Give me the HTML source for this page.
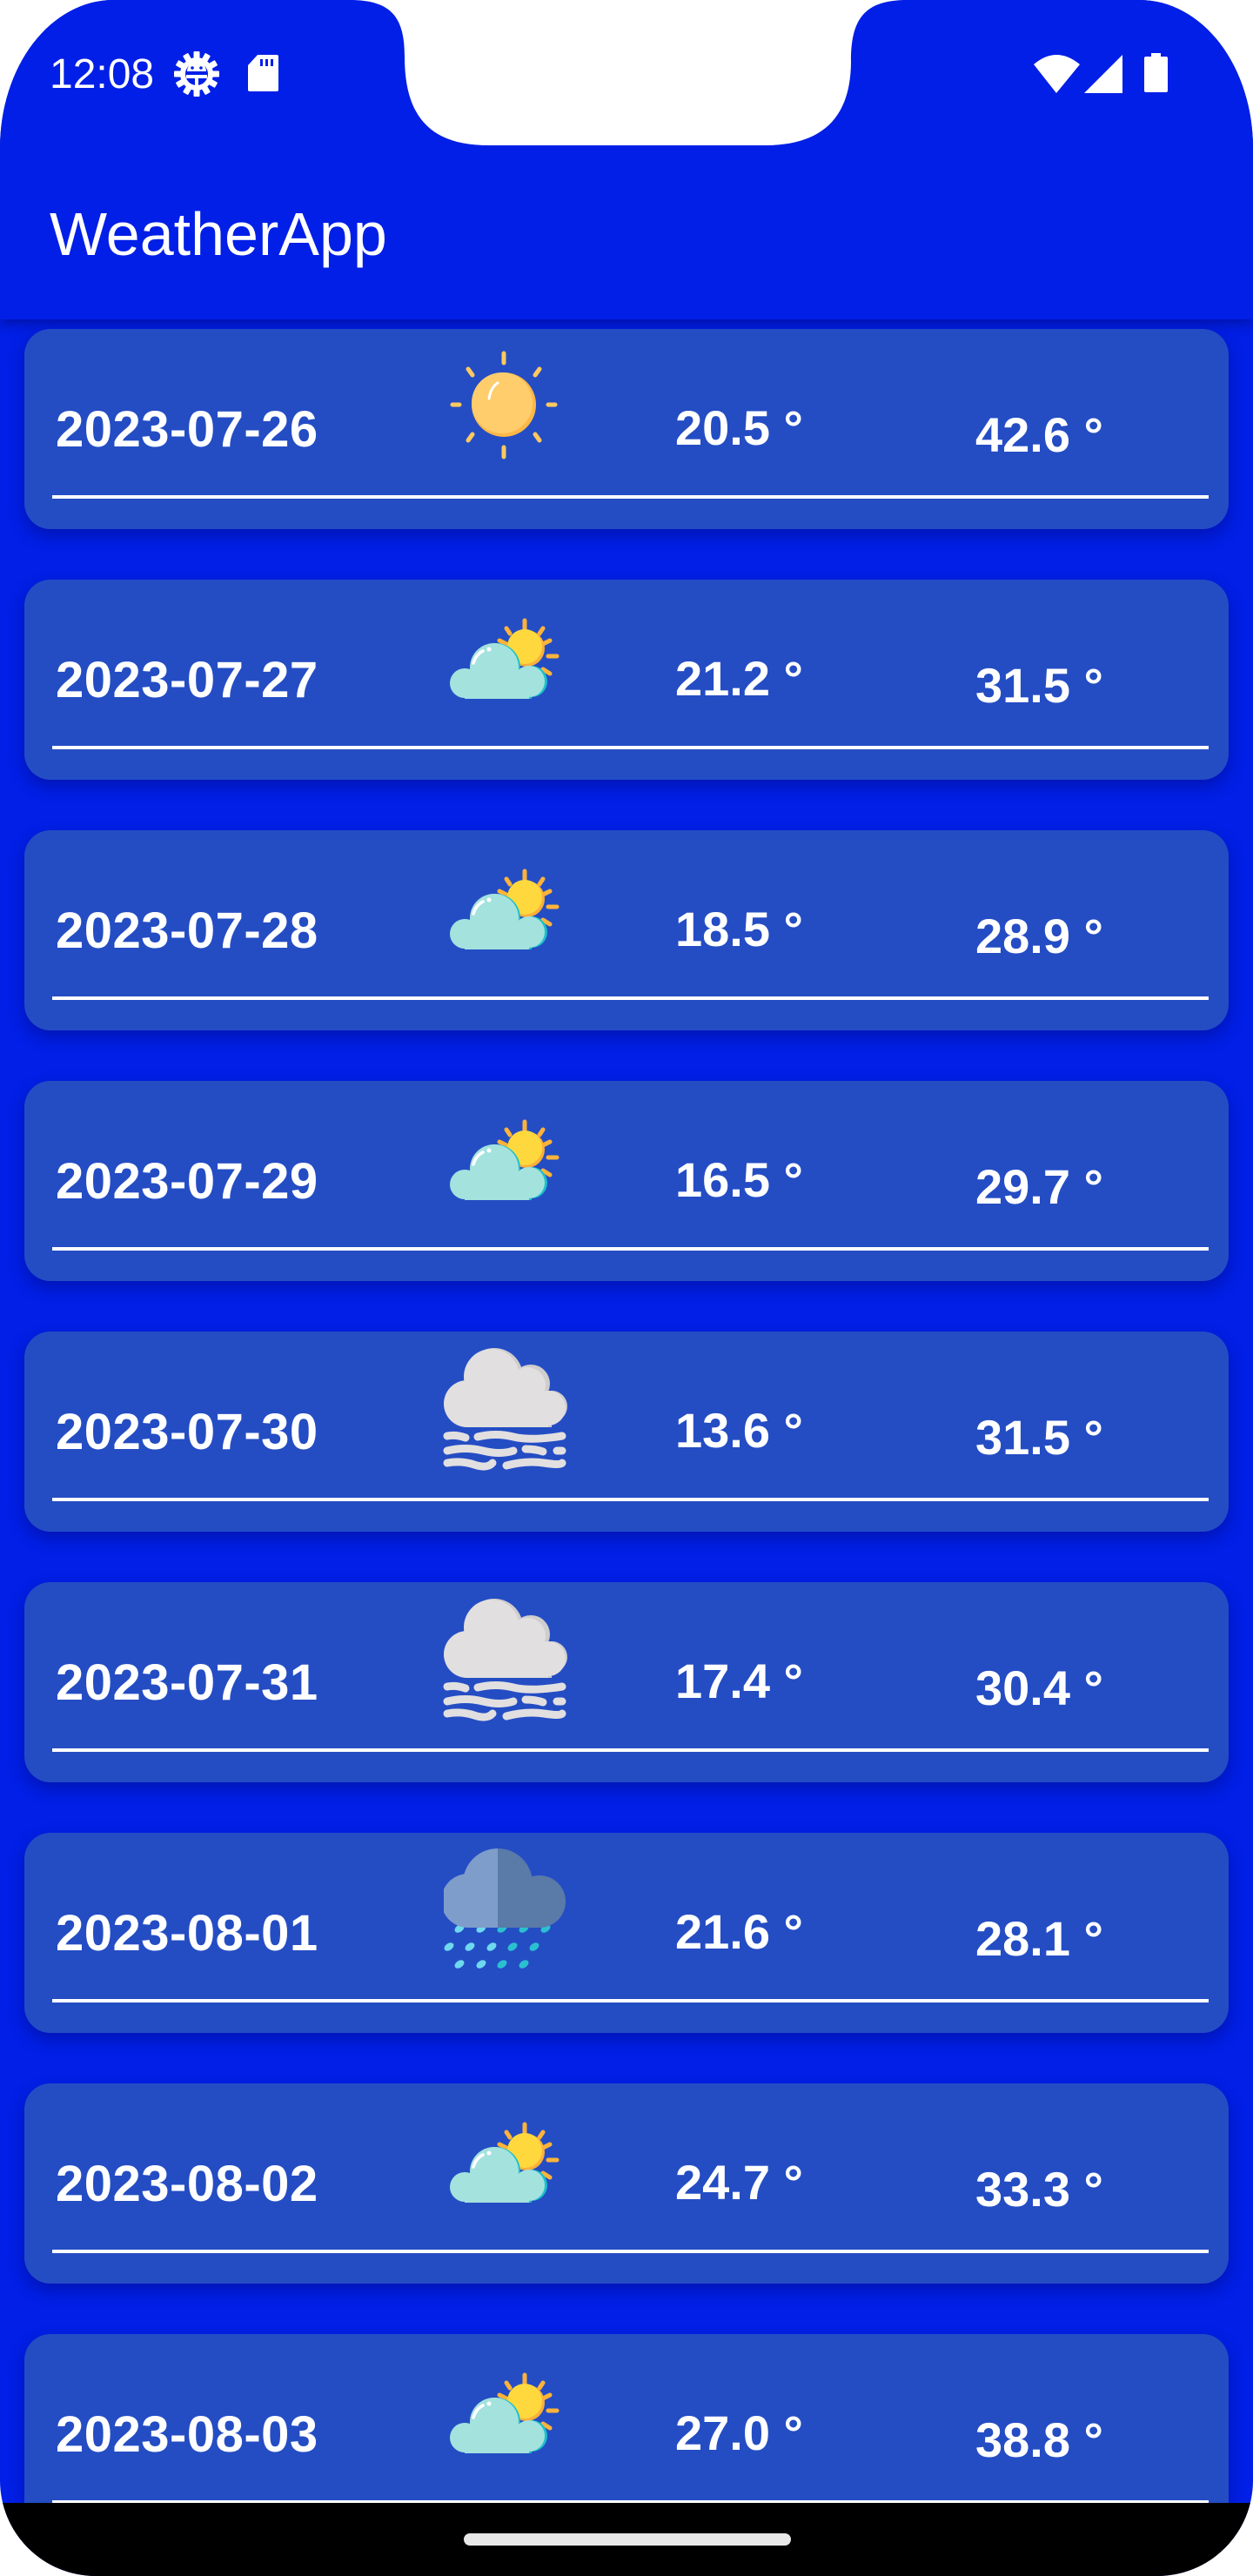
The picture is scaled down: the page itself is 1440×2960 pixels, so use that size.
<!DOCTYPE html>
<html><head><meta charset="utf-8"><style>
*{margin:0;padding:0;box-sizing:border-box}
html,body{width:1440px;height:2960px;overflow:hidden;background:#fff}
#screen{position:absolute;left:0;top:0;width:1440px;height:2960px;background:#011fe6;border-radius:130px 130px 110px 110px / 170px 170px 110px 110px;overflow:hidden;font-family:"Liberation Sans",sans-serif}
.appbar{position:absolute;left:0;top:0;width:1440px;height:367px;box-shadow:0 4px 14px rgba(0,0,80,.45);background:#011fe6}
.title{position:absolute;left:57px;top:234px;font-size:70px;color:#fff;line-height:1}
.time{position:absolute;left:57px;top:62px;font-size:48px;color:#fff;line-height:1}
.card{position:absolute;left:28px;width:1384px;height:230px;background:#244dc4;border-radius:30px;box-shadow:0 8px 18px rgba(0,0,90,.35)}
.card .d{position:absolute;left:36px;top:87px;font-size:58px;font-weight:bold;color:#fff;line-height:1;letter-spacing:.5px}
.card .t1{position:absolute;left:748px;top:86px;font-size:56px;font-weight:bold;color:#fff;line-height:1}
.card .t2{position:absolute;left:1093px;top:94px;font-size:56px;font-weight:bold;color:#fff;line-height:1}
.card .ln{position:absolute;left:32px;top:191px;width:1329px;height:4px;background:#fff}
.card svg{position:absolute;left:482px;top:20px}
.nav{position:absolute;left:0;top:2876px;width:1440px;height:84px;background:#000}
.pill{position:absolute;left:533px;top:2911px;width:376px;height:14px;border-radius:7px;background:#e8e8e8}
</style></head><body>
<svg width="0" height="0" style="position:absolute"><defs>
<g id="sun"><g stroke="#ffc95e" stroke-width="5" stroke-linecap="round">
<line x1="69" y1="8" x2="69" y2="19"/><line x1="69" y1="116" x2="69" y2="127"/><line x1="10" y1="67" x2="18" y2="67"/><line x1="120" y1="67" x2="128" y2="67"/>
<line x1="28" y1="26" x2="33" y2="33"/><line x1="110" y1="26" x2="105" y2="33"/><line x1="28" y1="108" x2="33" y2="101"/><line x1="110" y1="108" x2="105" y2="101"/></g>
<circle cx="69" cy="67" r="37" fill="#fdb848"/><circle cx="67" cy="65" r="35" fill="#ffcd6c"/>
<path d="M52 60 Q54 47 62 42" stroke="#fff" stroke-width="3" fill="none" stroke-linecap="round"/></g>
<g id="pc"><g stroke="#fdb33a" stroke-width="5" stroke-linecap="round">
<line x1="93" y1="27" x2="93" y2="37"/><line x1="72" y1="36" x2="76" y2="42"/><line x1="114" y1="36" x2="110" y2="42"/><line x1="64" y1="50" x2="72" y2="54"/><line x1="122" y1="50" x2="114" y2="54"/><line x1="120" y1="68" x2="130" y2="68"/><line x1="114" y1="83" x2="122" y2="88"/></g>
<circle cx="95" cy="59" r="21" fill="#fbb03b"/><circle cx="93" cy="57" r="20" fill="#ffd83d"/>
<g fill="#1cc0cb"><circle cx="25" cy="99" r="17"/><circle cx="60" cy="81" r="28"/><circle cx="101" cy="97" r="18"/><rect x="25" y="95" width="76" height="22"/></g>
<g fill="#a4e2de"><circle cx="24" cy="99" r="17"/><circle cx="58" cy="81" r="28"/><circle cx="98" cy="97" r="18"/><rect x="24" y="95" width="74" height="22"/></g>
<path d="M34 76 Q37 66 45 62" stroke="#fff" stroke-width="3.5" fill="none" stroke-linecap="round"/><circle cx="52" cy="60" r="2.5" fill="#fff"/></g>
<g id="fog"><g fill="#cfcdce"><circle cx="28" cy="63" r="27"/><circle cx="58" cy="32" r="33"/><circle cx="100" cy="40" r="22"/><circle cx="124" cy="66" r="18" /><rect x="28" y="50" width="96" height="40"/></g>
<g fill="#e1dfe0"><circle cx="27" cy="63" r="27"/><circle cx="55" cy="32" r="32"/><circle cx="96" cy="42" r="21"/><circle cx="120" cy="68" r="20"/><rect x="27" y="50" width="93" height="40"/></g>
<g stroke="#e1dfe0" stroke-width="9" stroke-linecap="round" fill="none">
<path d="M4 100 Q14 98 25 102"/><path d="M39 101 Q60 96 80 101 T136 100"/>
<path d="M4 117 Q25 112 45 117 T80 117"/><path d="M94 115 Q105 115 114 118"/><path d="M130 117 L136 117"/>
<path d="M4 131 Q20 128 35 133 T56 131"/><path d="M72 134 Q95 128 115 131 T136 131"/></g></g>
<g id="rain">
<g fill="#6ed9ee"><ellipse cx="18" cy="90" rx="6" ry="4" transform="rotate(-35 18 90)"/><ellipse cx="43" cy="90" rx="6" ry="4" transform="rotate(-35 43 90)"/><ellipse cx="6" cy="111" rx="6" ry="4" transform="rotate(-35 6 111)"/><ellipse cx="30" cy="111" rx="6" ry="4" transform="rotate(-35 30 111)"/><ellipse cx="55" cy="111" rx="6" ry="4" transform="rotate(-35 55 111)"/><ellipse cx="18" cy="131" rx="6" ry="4" transform="rotate(-35 18 131)"/><ellipse cx="43" cy="131" rx="6" ry="4" transform="rotate(-35 43 131)"/></g>
<g fill="#2bc0d0"><ellipse cx="67" cy="90" rx="6" ry="4" transform="rotate(-35 67 90)"/><ellipse cx="92" cy="90" rx="6" ry="4" transform="rotate(-35 92 90)"/><ellipse cx="117" cy="90" rx="6" ry="4" transform="rotate(-35 117 90)"/><ellipse cx="79" cy="111" rx="6" ry="4" transform="rotate(-35 79 111)"/><ellipse cx="104" cy="111" rx="6" ry="4" transform="rotate(-35 104 111)"/><ellipse cx="67" cy="131" rx="6" ry="4" transform="rotate(-35 67 131)"/><ellipse cx="92" cy="131" rx="6" ry="4" transform="rotate(-35 92 131)"/></g>
<clipPath id="cl"><rect x="0" y="-10" width="62" height="110"/></clipPath><clipPath id="cr"><rect x="62" y="-10" width="80" height="110"/></clipPath>
<g fill="#5a7aa8" clip-path="url(#cr)"><circle cx="28" cy="58" r="31"/><circle cx="62" cy="38" r="40"/><circle cx="110" cy="59" r="30"/><rect x="28" y="55" width="82" height="34"/></g>
<g fill="#7e9dcb" clip-path="url(#cl)"><circle cx="28" cy="58" r="31"/><circle cx="62" cy="38" r="40"/><circle cx="110" cy="59" r="30"/><rect x="28" y="55" width="82" height="34"/></g></g>
</defs></svg>
<div id="screen">
<div class="appbar"></div>
<svg style="position:absolute;left:0;top:0" width="1440" height="180" viewBox="0 0 1440 180"><path d="M402 0 C450 0 465 20 465 65 C465 140 500 167 562 167 L879 167 C940 167 978 140 978 70 C978 20 995 0 1043 0 Z" fill="#fff"/></svg>
<div class="time">12:08</div>
<svg style="position:absolute;left:199px;top:58px" width="54" height="54" viewBox="0 0 54 54">
<g fill="#fff" transform="translate(27 27)"><circle r="19"/>
<g id="t"><rect x="-3.5" y="-26" width="7" height="8" rx="1"/></g>
<use href="#t" transform="rotate(30)"/><use href="#t" transform="rotate(60)"/><use href="#t" transform="rotate(90)"/><use href="#t" transform="rotate(120)"/><use href="#t" transform="rotate(150)"/><use href="#t" transform="rotate(180)"/><use href="#t" transform="rotate(210)"/><use href="#t" transform="rotate(240)"/><use href="#t" transform="rotate(270)"/><use href="#t" transform="rotate(300)"/><use href="#t" transform="rotate(330)"/></g>
<g transform="translate(27 27)" fill="#011fe6"><circle r="13"/></g>
<g transform="translate(27 27)" fill="#fff"><path d="M-11 -3 A11 11 0 0 1 11 -3 Z"/><rect x="-12" y="1" width="24" height="4"/><rect x="-2" y="1" width="4" height="13"/><circle cx="-5" cy="-7" r="1.8" fill="#011fe6"/><circle cx="5" cy="-7" r="1.8" fill="#011fe6"/></g></svg>
<svg style="position:absolute;left:284px;top:62px" width="38" height="45" viewBox="0 0 38 45"><path d="M12 1 H34 Q36 1 36 3 V41 Q36 43 34 43 H3 Q1 43 1 41 V13 Z" fill="#fff"/><rect x="15" y="6" width="3" height="8" fill="#011fe6"/><rect x="21" y="6" width="3" height="8" fill="#011fe6"/><rect x="27" y="6" width="3" height="8" fill="#011fe6"/></svg>
<svg style="position:absolute;left:1185px;top:60px" width="160" height="50" viewBox="1185 60 160 50"><path d="M1188 74 Q1214 52 1241 74 L1214 107 Z" fill="#fff"/><path d="M1246 107 L1290 63 L1290 107 Z" fill="#fff"/><rect x="1315" y="65" width="27" height="41" rx="2" fill="#fff"/><rect x="1323" y="61" width="11" height="6" fill="#fff"/></svg>
<div class="title">WeatherApp</div>

<div class="card" style="top:378px"><div class="d">2023-07-26</div><svg width="140" height="140" viewBox="0 0 140 140"><use href="#sun"/></svg><div class="t1">20.5 °</div><div class="t2">42.6 °</div><div class="ln"></div></div>
<div class="card" style="top:666px"><div class="d">2023-07-27</div><svg width="140" height="140" viewBox="0 0 140 140"><use href="#pc"/></svg><div class="t1">21.2 °</div><div class="t2">31.5 °</div><div class="ln"></div></div>
<div class="card" style="top:954px"><div class="d">2023-07-28</div><svg width="140" height="140" viewBox="0 0 140 140"><use href="#pc"/></svg><div class="t1">18.5 °</div><div class="t2">28.9 °</div><div class="ln"></div></div>
<div class="card" style="top:1242px"><div class="d">2023-07-29</div><svg width="140" height="140" viewBox="0 0 140 140"><use href="#pc"/></svg><div class="t1">16.5 °</div><div class="t2">29.7 °</div><div class="ln"></div></div>
<div class="card" style="top:1530px"><div class="d">2023-07-30</div><svg width="140" height="140" viewBox="0 0 140 140" style="overflow:visible"><use href="#fog"/></svg><div class="t1">13.6 °</div><div class="t2">31.5 °</div><div class="ln"></div></div>
<div class="card" style="top:1818px"><div class="d">2023-07-31</div><svg width="140" height="140" viewBox="0 0 140 140" style="overflow:visible"><use href="#fog"/></svg><div class="t1">17.4 °</div><div class="t2">30.4 °</div><div class="ln"></div></div>
<div class="card" style="top:2106px"><div class="d">2023-08-01</div><svg width="140" height="140" viewBox="0 0 140 140" style="overflow:visible"><use href="#rain"/></svg><div class="t1">21.6 °</div><div class="t2">28.1 °</div><div class="ln"></div></div>
<div class="card" style="top:2394px"><div class="d">2023-08-02</div><svg width="140" height="140" viewBox="0 0 140 140"><use href="#pc"/></svg><div class="t1">24.7 °</div><div class="t2">33.3 °</div><div class="ln"></div></div>
<div class="card" style="top:2682px"><div class="d">2023-08-03</div><svg width="140" height="140" viewBox="0 0 140 140"><use href="#pc"/></svg><div class="t1">27.0 °</div><div class="t2">38.8 °</div><div class="ln"></div></div>
<div class="nav"></div><div class="pill"></div>
</div>
</body></html>
